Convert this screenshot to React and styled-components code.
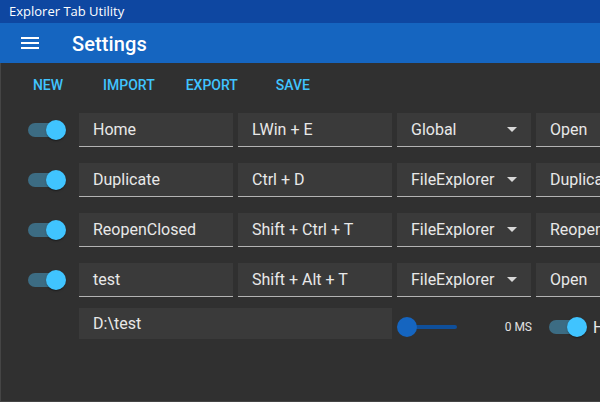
import React from "react";
import styled, { createGlobalStyle } from "styled-components";

const Global = createGlobalStyle`
  html, body {
    margin: 0;
    padding: 0;
    background: #303030;
  }
  * {
    box-sizing: border-box;
  }
`;

const Window = styled.div`
  width: 600px;
  height: 402px;
  overflow: hidden;
  display: flex;
  flex-direction: column;
  font-family: Roboto, "Liberation Sans", sans-serif;
  background: #303030;
`;

const TitleBar = styled.div`
  height: 23px;
  line-height: 23px;
  padding-left: 9px;
  background: #0e47a1;
  color: #fff;
  font-size: 13px;
  font-family: "Open Sans", Roboto, sans-serif;
`;

const AppBar = styled.div`
  height: 40px;
  display: flex;
  align-items: center;
  padding-left: 18px;
  background: #1565c0;
  color: #fff;
`;

const Title = styled.div`
  margin-left: 30px;
  margin-top: 2px;
  font-size: 20px;
  font-weight: 500;
  letter-spacing: 0.1px;
`;

const Body = styled.div`
  flex: 1;
  border-left: 1px solid #454545;
  border-bottom: 1px solid #454545;
  padding: 4px 0 0 15px;
  overflow: hidden;
`;

const Toolbar = styled.div`
  display: flex;
  gap: 15px;
  margin-bottom: 8px;
`;

const TextButton = styled.button`
  min-width: 64px;
  height: 36px;
  padding: 0 8px;
  border: 0;
  background: transparent;
  color: #40c4ff;
  font-family: Roboto, sans-serif;
  font-size: 14px;
  font-weight: 500;
  letter-spacing: 0;
  text-transform: uppercase;
`;

const Row = styled.div`
  display: flex;
  align-items: ${({ $top }) => ($top ? "flex-start" : "center")};
  gap: 5px;
  margin-bottom: ${({ $gap }) => $gap}px;
  white-space: nowrap;
`;

const SwitchWrap = styled.div`
  position: relative;
  width: 58px;
  height: 38px;
  flex: none;
`;

const Track = styled.div`
  position: absolute;
  left: 12px;
  top: 12px;
  width: 34px;
  height: 14px;
  border-radius: 7px;
  background: #3c6c83;
`;

const Thumb = styled.div`
  position: absolute;
  left: 30px;
  top: 9px;
  width: 20px;
  height: 20px;
  border-radius: 50%;
  background: #40c4ff;
  box-shadow: 0 2px 1px -1px rgba(0, 0, 0, 0.2), 0 1px 1px rgba(0, 0, 0, 0.14),
    0 1px 3px rgba(0, 0, 0, 0.12);
`;

const Field = styled.div`
  flex: none;
  width: ${({ $w }) => $w}px;
  height: ${({ $h }) => $h || 34}px;
  display: flex;
  align-items: center;
  justify-content: space-between;
  padding: 0 14px;
  background: #3a3a3a;
  border-bottom: ${({ $plain }) => ($plain ? "0" : "1px solid #b3b3b3")};
  color: #e8e8e8;
  font-size: 16px;
  overflow: hidden;
`;

const Arrow = styled.span`
  width: 0;
  height: 0;
  border-left: 5px solid transparent;
  border-right: 5px solid transparent;
  border-top: 5px solid #d8d8d8;
`;

const Spacer = styled.div`
  width: 58px;
  flex: none;
`;

const SliderBox = styled.div`
  width: 135px;
  flex: none;
  display: flex;
  align-items: center;
  justify-content: space-between;
  margin-top: 8px;
  height: 22px;
`;

const Slider = styled.div`
  position: relative;
  width: 60px;
  height: 22px;
`;

const SliderRail = styled.div`
  position: absolute;
  left: 10px;
  right: 0;
  top: 9px;
  height: 4px;
  border-radius: 2px;
  background: #0f4f9a;
`;

const SliderThumb = styled.div`
  position: absolute;
  left: 0;
  top: 1px;
  width: 20px;
  height: 20px;
  border-radius: 50%;
  background: #1565c0;
`;

const Value = styled.span`
  font-size: 12px;
  color: #e0e0e0;
`;

const ToggleLabel = styled.label`
  display: flex;
  align-items: center;
`;

const Label = styled.span`
  font-size: 16px;
  color: #e8e8e8;
  margin-left: -2px;
`;

const Toggle = () => (
  <SwitchWrap>
    <Track />
    <Thumb />
  </SwitchWrap>
);

const rows = [
  ["Home", "LWin + E", "Global", "Open"],
  ["Duplicate", "Ctrl + D", "FileExplorer", "Duplicate"],
  ["ReopenClosed", "Shift + Ctrl + T", "FileExplorer", "ReopenClosed"],
  ["test", "Shift + Alt + T", "FileExplorer", "Open"],
];

export default function App() {
  return (
    <Window>
      <Global />
      <TitleBar>Explorer Tab Utility</TitleBar>
      <AppBar>
        <svg width="24" height="24" viewBox="0 0 24 24" fill="#fff">
          <path d="M3 18h18v-2H3v2zm0-5h18v-2H3v2zm0-7v2h18V6H3z" />
        </svg>
        <Title>Settings</Title>
      </AppBar>
      <Body>
        <Toolbar>
          <TextButton>New</TextButton>
          <TextButton>Import</TextButton>
          <TextButton>Export</TextButton>
          <TextButton>Save</TextButton>
        </Toolbar>
        {rows.map(([name, keys, scope, action], i) => (
          <Row key={name} $gap={i === rows.length - 1 ? 9 : 12}>
            <Toggle />
            <Field $w={154}>{name}</Field>
            <Field $w={154}>{keys}</Field>
            <Field $w={134}>
              {scope}
              <Arrow />
            </Field>
            <Field $w={134}>{action}</Field>
          </Row>
        ))}
        <Row $gap={0} $top>
          <Spacer />
          <Field $w={313} $h={31} $plain>
            D:\test
          </Field>
          <SliderBox>
            <Slider>
              <SliderRail />
              <SliderThumb />
            </Slider>
            <Value>0 MS</Value>
          </SliderBox>
          <ToggleLabel>
            <Toggle />
            <Label>Hide</Label>
          </ToggleLabel>
        </Row>
      </Body>
    </Window>
  );
}
